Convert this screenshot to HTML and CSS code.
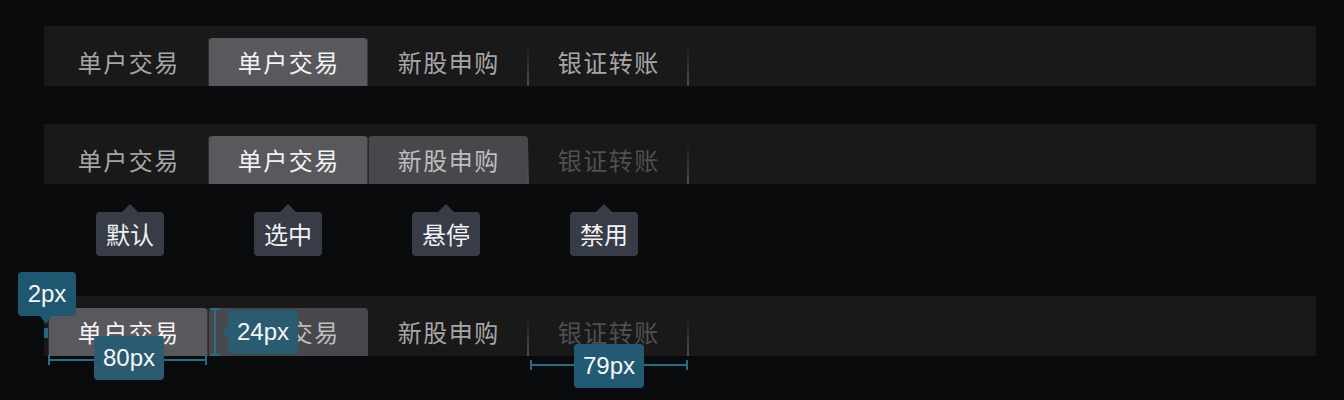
FILE: index.html
```html
<!DOCTYPE html>
<html lang="zh">
<head>
<meta charset="utf-8">
<link rel="stylesheet" href="styles.css">
</head>
<body>
<div class="page">
  <div class="bar">
    <div class="tab">单户交易</div>
    <div class="tab selected">单户交易</div>
    <div class="tab sep">新股申购</div>
    <div class="tab sep">银证转账</div>
  </div>

  <div class="bar bar2">
    <div class="tab">单户交易</div>
    <div class="tab selected">单户交易</div>
    <div class="tab hover sep">新股申购</div>
    <div class="tab disabled sep">银证转账</div>
  </div>

  <div class="legend">
    <div class="cell"><span class="tip">默认</span></div>
    <div class="cell"><span class="tip">选中</span></div>
    <div class="cell"><span class="tip">悬停</span></div>
    <div class="cell"><span class="tip">禁用</span></div>
  </div>

  <div class="bar bar3">
    <div class="tab selected">单户交易</div>
    <div class="tab hover">单户交易</div>
    <div class="tab sep">新股申购</div>
    <div class="tab disabled sep">银证转账</div>

    <div class="mark mark-2px"></div>
    <div class="note note-2px">2px</div>

    <div class="hline hline-80"></div>
    <div class="note note-80">80px</div>

    <div class="vline vline-24"></div>
    <div class="note note-24">24px</div>

    <div class="hline hline-79"></div>
    <div class="note note-79">79px</div>
  </div>
</div>
</body>
</html>
```

FILE: styles.css
```css
html, body {
  margin: 0;
  padding: 0;
  background: #0a0b0d;
}

body {
  font-family: "Noto Sans CJK SC", "Noto Sans", sans-serif;
  width: 1344px;
  height: 400px;
  overflow: hidden;
}

.page {
  padding: 26px 28px 0 44px;
}

.bar {
  position: relative;
  display: flex;
  height: 48px;
  padding: 12px 0 0 4px;
  background: #19191a;
}

.bar2 {
  margin-top: 38px;
}

.bar3 {
  margin-top: 40px;
}

.tab {
  position: relative;
  width: 160px;
  height: 48px;
  flex: none;
  display: flex;
  align-items: center;
  justify-content: center;
  font-size: 24px;
  line-height: 1;
  color: #a6a6a8;
  letter-spacing: 1.5px;
  text-indent: 1.5px;
}

.tab.sep::after {
  content: "";
  position: absolute;
  right: -1px;
  bottom: 0;
  width: 2px;
  height: 40px;
  background: linear-gradient(to bottom, rgba(90, 90, 92, 0), #4e4e50);
}

.tab.selected {
  background: #59585d;
  color: #f4f4f6;
  border-radius: 4px 4px 0 0;
  box-shadow: inset 1px 0 0 #2e2e30, inset -1px 0 0 #3a3a3c;
}

.tab.hover {
  background: #48474c;
  color: #bdbdc0;
  border-radius: 4px 4px 0 0;
  box-shadow: inset 1px 0 0 #2a2a2c;
}

.tab.disabled {
  color: #4f4f52;
}

.legend {
  display: flex;
  padding: 20px 0 0 7px;
  height: 52px;
}

.cell {
  width: 158px;
  display: flex;
  justify-content: center;
}

.tip {
  position: relative;
  display: block;
  margin-top: 8px;
  width: 68px;
  height: 44px;
  line-height: 44px;
  text-align: center;
  background: #373c47;
  color: #f2f2f4;
  font-size: 24px;
  border-radius: 4px;
}

.tip::before {
  content: "";
  position: absolute;
  left: 26px;
  top: -8px;
  border-left: 8px solid transparent;
  border-right: 8px solid transparent;
  border-bottom: 8px solid #373c47;
}

/* annotations */
.note {
  position: absolute;
  height: 44px;
  line-height: 44px;
  padding: 0 8px;
  background: #245a72;
  color: #f4f6f8;
  font-family: "Liberation Sans", Arial, sans-serif;
  font-size: 24px;
  border-radius: 4px;
  text-align: center;
}

.note-2px {
  left: -26px;
  top: -24px;
  width: 42px;
  background: #1f5670;
}

.note-2px::after {
  content: "";
  position: absolute;
  left: 22px;
  bottom: -8px;
  border-left: 6px solid transparent;
  border-right: 6px solid transparent;
  border-top: 8px solid #1f5670;
}

.mark-2px {
  position: absolute;
  left: 0;
  top: 32px;
  width: 4px;
  height: 10px;
  background: #2b6680;
}

.hline {
  position: absolute;
  height: 2px;
  background: #2d6a86;
}

.hline::before,
.hline::after {
  content: "";
  position: absolute;
  top: -4px;
  width: 2px;
  height: 10px;
  background: #2d6a86;
}

.hline::before { left: 0; }
.hline::after { right: 0; }

.hline-80 {
  left: 4px;
  top: 63px;
  width: 159px;
}

.note-80 {
  left: 50px;
  top: 40px;
  width: 54px;
  background: #2a5b70;
}

.vline {
  position: absolute;
  width: 2px;
  background: #2d6a86;
}

.vline::before,
.vline::after {
  content: "";
  position: absolute;
  left: -4px;
  width: 10px;
  height: 2px;
  background: #2d6a86;
}

.vline::before { top: 0; }
.vline::after { bottom: 0; }

.vline-24 {
  left: 170px;
  top: 12px;
  height: 48px;
}

.note-24 {
  left: 184px;
  top: 14px;
  width: 54px;
  background: #2a5b70;
}

.note-24::before {
  content: "";
  position: absolute;
  left: -6px;
  top: 16px;
  border-top: 6px solid transparent;
  border-bottom: 6px solid transparent;
  border-right: 6px solid #2a5b70;
}

.hline-79 {
  left: 486px;
  top: 68px;
  width: 158px;
}

.note-79 {
  left: 530px;
  top: 48px;
  width: 54px;
  background: #235a73;
}
```
